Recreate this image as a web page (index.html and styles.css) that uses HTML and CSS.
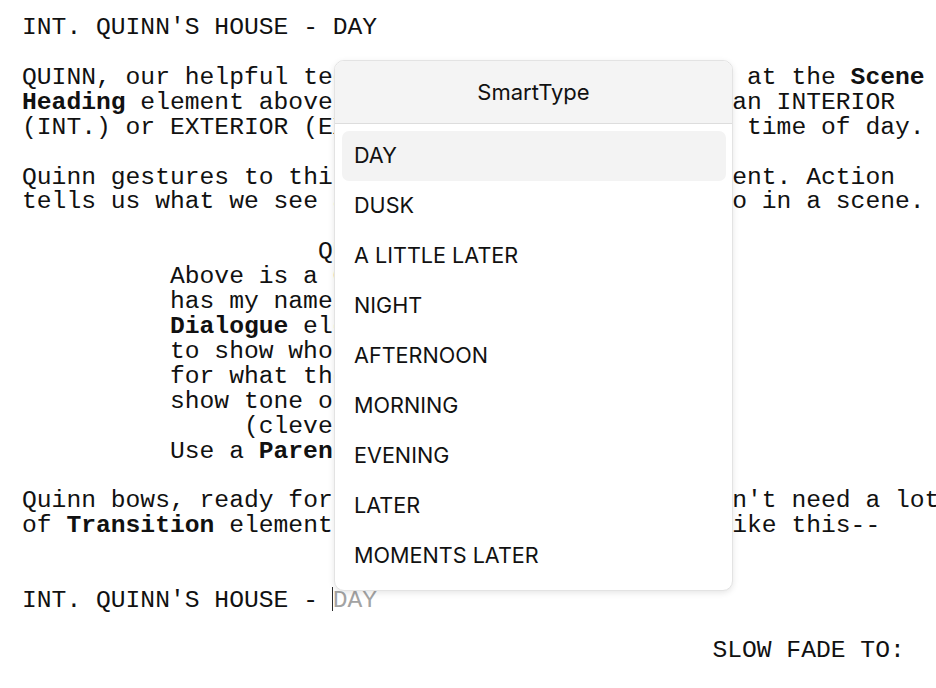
FILE: index.html
```html
<!DOCTYPE html>
<html>
<head>
<meta charset="utf-8">
<link rel="stylesheet" href="styles.css">
</head>
<body>
<div class="script">
<p class="scene">INT. QUINN'S HOUSE - DAY</p>
<p class="action gap">QUINN, our helpful technology wizard, now points at the <b>Scene</b>
<b>Heading</b> element above that says whether it's in an INTERIOR
(INT.) or EXTERIOR (EXT.) location, and also the time of day.</p>
<p class="action gap">Quinn gestures to this line, it's an Action element. Action
tells us what we see and hear, and what people do in a scene.</p>
<p class="character gap">QUINN</p>
<p class="dialogue">Above is a Character element. It
has my name in caps. This is a
<b>Dialogue</b> element. It is used
to show who is speaking and
for what they say. It can also
show tone of voice:</p>
<p class="paren">(cleverly)</p>
<p class="dialogue">Use a <b>Parenthetical</b> for that.</p>
<p class="action gap">Quinn bows, ready for the last scene. Writers don't need a lot
of <b>Transition</b> elements in a screenplay, except like this--</p>
<p class="scene gap2">INT. QUINN'S HOUSE - <span class="placeholder">DAY</span></p>
<p class="transition gap">SLOW FADE TO:</p>
</div>

<div class="popup">
  <div class="popup-header">SmartType</div>
  <ul class="popup-list">
    <li class="item active">DAY</li>
    <li class="item">DUSK</li>
    <li class="item">A LITTLE LATER</li>
    <li class="item">NIGHT</li>
    <li class="item">AFTERNOON</li>
    <li class="item">MORNING</li>
    <li class="item">EVENING</li>
    <li class="item">LATER</li>
    <li class="item">MOMENTS LATER</li>
  </ul>
</div>
</body>
</html>
```

FILE: styles.css
```css
html, body {
  margin: 0;
  padding: 0;
  background: #ffffff;
  overflow: hidden;
  width: 936px;
  height: 688px;
}

.script {
  padding: 15px 0 0 22px;
  font-family: "Liberation Mono", "Courier New", monospace;
  font-size: 24.67px;
  line-height: 24.92px;
  color: #111111;
}

.script p {
  margin: 0;
  white-space: pre;
}

.script b {
  font-weight: 700;
}

.script .gap {
  margin-top: 24.92px;
}

.script .gap2 {
  margin-top: 49.84px;
}

.character {
  padding-left: 20ch;
}

.dialogue {
  padding-left: 10ch;
}

.paren {
  padding-left: 15ch;
}

.transition {
  padding-left: 46.66ch;
}

.placeholder {
  position: relative;
  color: #a3a3a3;
}

.placeholder::before {
  content: "";
  position: absolute;
  left: -1px;
  top: 1px;
  width: 1.5px;
  height: 24px;
  background: #2a2a2a;
}

.popup {
  position: absolute;
  left: 334px;
  top: 60px;
  width: 399px;
  box-sizing: border-box;
  background: #ffffff;
  border: 1px solid #e3e3e3;
  border-radius: 10px;
  box-shadow: 0 2px 6px rgba(0, 0, 0, 0.10);
  overflow: hidden;
  font-family: Inter, "Noto Sans", sans-serif;
  color: #111111;
}

.popup-header {
  height: 62px;
  display: flex;
  align-items: center;
  justify-content: center;
  background: #f4f4f4;
  border-bottom: 1px solid #dddddd;
  font-size: 22px;
  font-weight: 400;
}

.popup-list {
  list-style: none;
  margin: 0;
  padding: 7px 6px 9px 7px;
}

.item {
  height: 50px;
  box-sizing: border-box;
  padding: 0 0 2px 12px;
  display: flex;
  align-items: center;
  border-radius: 7px;
  font-size: 21.6px;
  font-weight: 400;
}

.item.active {
  background: #f3f3f3;
}
```
